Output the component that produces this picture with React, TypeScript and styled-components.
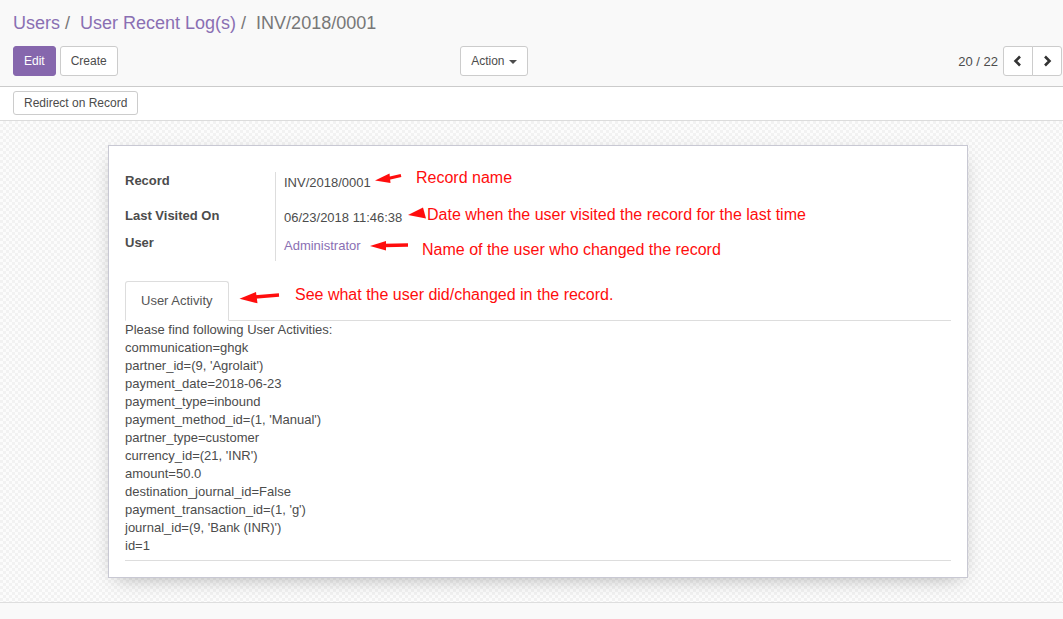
import React from 'react';
import styled, { createGlobalStyle } from 'styled-components';

const PURPLE = '#8667ad';
const LINK = '#8a6fb3';
const TEXT = '#4c4c4c';
const RED = '#ff0d0d';

const Global = createGlobalStyle`
  html, body { margin: 0; padding: 0; height: 100%; overflow: hidden; }
  body {
    font-family: "Liberation Sans", Arial, sans-serif;
    font-size: 13px;
    color: ${TEXT};
    background: #fff;
  }
  #root { height: 100%; }
  * { box-sizing: border-box; }
`;

const Page = styled.div`
  display: flex;
  flex-direction: column;
  height: 100%;
`;

const ControlPanel = styled.div`
  background: #f9f9f9;
  border-bottom: 1px solid #cbcbcb;
  padding: 10px 1px 10px 13px;
  display: flex;
  flex-direction: column;
  gap: 10px;
`;

const Breadcrumb = styled.ol`
  list-style: none;
  margin: 0;
  padding: 0;
  display: flex;
  font-size: 18px;
  line-height: 26px;
`;

const Crumb = styled.li<{ $active?: boolean }>`
  color: ${p => (p.$active ? '#777' : LINK)};
  white-space: pre;
`;

const Sep = styled.span`
  color: #777;
  margin: 0 10px 0 5px;
`;

const CpRow = styled.div`
  display: flex;
  height: 30px;
`;

const CpHalf = styled.div<{ $end?: boolean }>`
  flex: 1;
  display: flex;
  align-items: center;
  justify-content: ${p => (p.$end ? 'flex-end' : 'space-between')};
`;

const BtnGroup = styled.div`
  display: flex;
  gap: 4px;
  align-items: center;
`;

const Button = styled.button<{ $primary?: boolean; $small?: boolean }>`
  font-family: inherit;
  font-size: 12px;
  line-height: 18px;
  padding: ${p => (p.$small ? '2px 10px' : '5px 10px')};
  border-radius: 3px;
  border: 1px solid ${p => (p.$primary ? PURPLE : '#ccc')};
  background: ${p => (p.$primary ? PURPLE : '#fff')};
  color: ${p => (p.$primary ? '#fff' : TEXT)};
  display: inline-flex;
  align-items: center;
  gap: 4px;
  cursor: pointer;
`;

const ActionButton = styled(Button)`
  margin-right: 10px;
  padding: 5px 10px 5px 10px;
`;

const Caret = styled.span`
  width: 0;
  height: 0;
  border-left: 4px solid transparent;
  border-right: 4px solid transparent;
  border-top: 4px solid ${TEXT};
  margin-top: 1px;
`;

const PagerValue = styled.span`
  font-size: 13px;
  color: ${TEXT};
  margin-right: 5px;
`;

const PagerGroup = styled.div`
  display: flex;
`;

const PagerButton = styled.button<{ $first?: boolean }>`
  width: 30px;
  height: 30px;
  padding: 0;
  background: #fff;
  border: 1px solid #ccc;
  border-radius: ${p => (p.$first ? '3px 0 0 3px' : '0 3px 3px 0')};
  margin-left: ${p => (p.$first ? '0' : '-1px')};
  display: flex;
  align-items: center;
  justify-content: center;
`;

const StatusBar = styled.div`
  padding: 4px 13px 5px;
  border-bottom: 1px solid #dcdcdc;
  background: #fff;
  display: flex;
`;

const FormArea = styled.div`
  padding: 24px 95px 24px 108px;
  background-color: #fbfbfb;
  background-image: repeating-conic-gradient(#f2f2f2 0 25%, #fcfcfc 0 50%);
  background-size: 6px 6px;
  border-bottom: 1px solid #dedede;
`;

const Sheet = styled.div`
  position: relative;
  background: #fff;
  border: 1px solid #c8c8d3;
  box-shadow: 0 6px 20px -8px rgba(0, 0, 0, 0.35);
  padding: 16px;
`;

const Group = styled.div`
  display: grid;
  grid-template-columns: 151px 1fr;
  grid-template-rows: 35px 27px 27px;
  margin-top: 10px;
  line-height: 18px;
`;

const Label = styled.div`
  font-weight: bold;
  border-right: 1px solid #ddd;
  color: ${TEXT};
`;

const Value = styled.div<{ $link?: boolean }>`
  padding: ${p => (p.$link ? '3px' : '2px')} 0 0 8px;
  color: ${p => (p.$link ? LINK : TEXT)};
`;

const Tabs = styled.ul`
  list-style: none;
  margin: 20px 0 0;
  padding: 0;
  display: flex;
  border-bottom: 1px solid #ddd;
`;

const Tab = styled.li`
  padding: 10px 15px;
  line-height: 18px;
  border: 1px solid #ddd;
  border-bottom-color: #fff;
  border-radius: 3px 3px 0 0;
  margin-bottom: -1px;
  background: #fff;
  color: #555;
`;

const TabPane = styled.div`
  line-height: 18px;
  padding-bottom: 5px;
  border-bottom: 1px solid #ddd;
`;

const Line = styled.div`
  white-space: pre;
`;

const Note = styled.span<{ $l: number; $t: number }>`
  position: absolute;
  left: ${p => p.$l}px;
  top: ${p => p.$t}px;
  font-size: 16px;
  line-height: 18px;
  color: ${RED};
  white-space: nowrap;
`;

const ArrowSvg = styled.svg<{ $l: number; $t: number }>`
  position: absolute;
  left: ${p => p.$l}px;
  top: ${p => p.$t}px;
  overflow: visible;
`;

const Footer = styled.div`
  flex: 1;
  background: #f9f9f9;
`;

// page-coordinate helpers (sheet padding box origin is at 109,146)
const OX = 109;
const OY = 146;

function Arrow({ x, y, w, h, head, shaft, sw = 3 }: {
  x: number; y: number; w: number; h: number;
  head: string; shaft?: [number, number, number, number]; sw?: number;
}) {
  return (
    <ArrowSvg $l={x - OX} $t={y - OY} width={w} height={h} viewBox={`${x} ${y} ${w} ${h}`}>
      {shaft && (
        <line x1={shaft[0]} y1={shaft[1]} x2={shaft[2]} y2={shaft[3]} stroke={RED} strokeWidth={sw} />
      )}
      <polygon points={head} fill={RED} />
    </ArrowSvg>
  );
}

function Chevron({ dir }: { dir: 'left' | 'right' }) {
  const d = dir === 'left' ? 'M7 1.5 L2.5 6 L7 10.5' : 'M3 1.5 L7.5 6 L3 10.5';
  return (
    <svg width="10" height="12" viewBox="0 0 10 12">
      <path d={d} fill="none" stroke="#333" strokeWidth="2.6" strokeLinejoin="miter" />
    </svg>
  );
}

const activities = [
  'Please find following User Activities:',
  'communication=ghgk',
  "partner_id=(9, 'Agrolait')",
  'payment_date=2018-06-23',
  'payment_type=inbound',
  "payment_method_id=(1, 'Manual')",
  'partner_type=customer',
  "currency_id=(21, 'INR')",
  'amount=50.0',
  'destination_journal_id=False',
  "payment_transaction_id=(1, 'g')",
  "journal_id=(9, 'Bank (INR)')",
  'id=1',
];

export default function App() {
  return (
    <>
      <Global />
      <Page>
        <ControlPanel>
          <Breadcrumb>
            <Crumb>Users</Crumb>
            <Sep>/</Sep>
            <Crumb>User Recent Log(s)</Crumb>
            <Sep>/</Sep>
            <Crumb $active>INV/2018/0001</Crumb>
          </Breadcrumb>
          <CpRow>
            <CpHalf>
              <BtnGroup>
                <Button $primary>Edit</Button>
                <Button>Create</Button>
              </BtnGroup>
              <ActionButton>
                Action <Caret />
              </ActionButton>
            </CpHalf>
            <CpHalf $end>
              <PagerValue>20 / 22</PagerValue>
              <PagerGroup>
                <PagerButton $first aria-label="Previous"><Chevron dir="left" /></PagerButton>
                <PagerButton aria-label="Next"><Chevron dir="right" /></PagerButton>
              </PagerGroup>
            </CpHalf>
          </CpRow>
        </ControlPanel>
        <StatusBar>
          <Button $small>Redirect on Record</Button>
        </StatusBar>
        <FormArea>
          <Sheet>
            <Group>
              <Label>Record</Label>
              <Value>INV/2018/0001</Value>
              <Label>Last Visited On</Label>
              <Value>06/23/2018 11:46:38</Value>
              <Label>User</Label>
              <Value $link>Administrator</Value>
            </Group>
            <Tabs>
              <Tab>User Activity</Tab>
            </Tabs>
            <TabPane>
              {activities.map(a => (
                <Line key={a}>{a}</Line>
              ))}
            </TabPane>

            <Arrow x={372} y={170} w={32} h={16}
              head="375,180.5 389.5,173.5 390.5,183"
              shaft={[388, 178.5, 401, 175.5]} />
            <Note $l={416 - OX} $t={168.5 - OY}>Record name</Note>

            <Arrow x={405} y={205} w={24} h={16}
              head="408,215 423,207.5 426,218.5" />
            <Note $l={427 - OX} $t={205.5 - OY}>Date when the user visited the record for the last time</Note>

            <Arrow x={368} y={238} w={42} h={15}
              head="370,246 386,241 386,250.5"
              shaft={[384, 245.5, 408, 245]} sw={3.5} />
            <Note $l={422 - OX} $t={240.5 - OY}>Name of the user who changed the record</Note>

            <Arrow x={237} y={289} w={44} h={17}
              head="239.5,298.8 256,292 257.5,303.3"
              shaft={[255, 297, 279, 295]} sw={3.3} />
            <Note $l={295 - OX} $t={285.5 - OY}>See what the user did/changed in the record.</Note>
          </Sheet>
        </FormArea>
        <Footer />
      </Page>
    </>
  );
}
